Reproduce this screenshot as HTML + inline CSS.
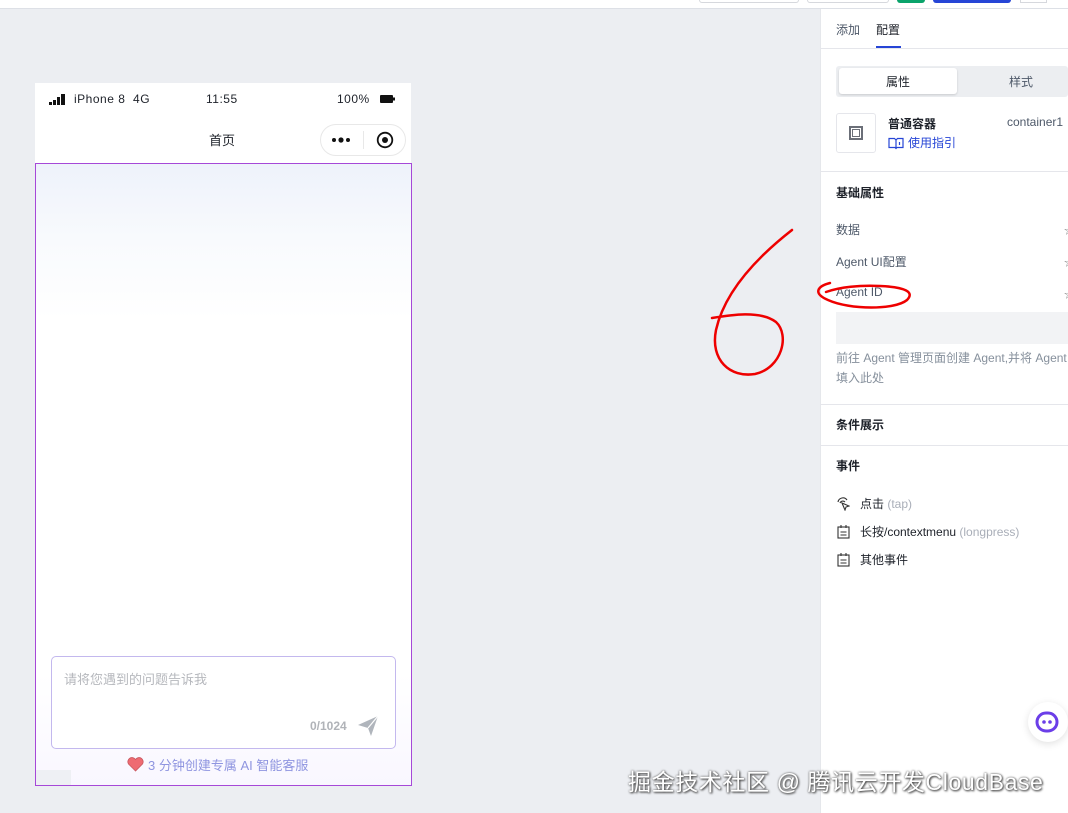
<!DOCTYPE html>
<html><head><meta charset="utf-8"><style>
*{margin:0;padding:0;box-sizing:border-box}
body{width:1068px;height:813px;overflow:hidden;background:#eceef2;font-family:"Liberation Sans","Noto Sans CJK SC",sans-serif;position:relative;color:#1d2129}
.abs{position:absolute}
.topbar{left:0;top:0;width:1068px;height:9px;background:#fff;border-bottom:1px solid #dde0e6}
.panel{left:820px;top:9px;width:248px;height:804px;background:#fff;border-left:1px solid #e5e7eb}
.t12{font-size:12px}
.hr{position:absolute;left:820px;width:248px;height:1px;background:#e5e6eb}
</style></head><body>
<div class="abs topbar"></div>
<div class="abs" style="left:699px;top:0;width:100px;height:3px;border:1px solid #d6d8dd;border-top:none;border-radius:0 0 3px 3px"></div>
<div class="abs" style="left:807px;top:0;width:82px;height:3px;border:1px solid #d6d8dd;border-top:none;border-radius:0 0 3px 3px"></div>
<div class="abs" style="left:897px;top:0;width:28px;height:3px;background:#0aa36b;border-radius:0 0 4px 4px"></div>
<div class="abs" style="left:933px;top:0;width:78px;height:3px;background:#2645d6;border-radius:0 0 4px 4px"></div>
<div class="abs" style="left:1020px;top:0;width:27px;height:3px;border:1px solid #d6d8dd;border-top:none"></div>

<!-- phone -->
<div class="abs" style="left:35px;top:83px;width:376px;height:80px;background:#fff"></div>
<svg class="abs" style="left:49px;top:93px" width="18" height="13"><rect x="0" y="9" width="3" height="3" fill="#111"/><rect x="4" y="7" width="3" height="5" fill="#111"/><rect x="8" y="4" width="3" height="8" fill="#111"/><rect x="12" y="1" width="4" height="11" fill="#111"/></svg>
<div class="abs t12" style="left:74px;top:92px;letter-spacing:.5px">iPhone 8&nbsp; 4G</div>
<div class="abs t12" style="left:206px;top:92px;letter-spacing:.5px">11:55</div>
<div class="abs t12" style="left:337px;top:92px;letter-spacing:.5px">100%</div>
<svg class="abs" style="left:380px;top:95px" width="15" height="8"><rect x="0" y="0" width="13" height="8" rx="1" fill="#111"/><rect x="13" y="2.5" width="2" height="3" fill="#111"/></svg>
<div class="abs" style="left:209px;top:130px;font-size:13px">首页</div>
<div class="abs" style="left:320px;top:124px;width:86px;height:32px;border:1px solid #e8e8e8;border-radius:16px;background:#fff"></div>
<div class="abs" style="left:363px;top:131px;width:1px;height:18px;background:#e8e8e8"></div>
<svg class="abs" style="left:331px;top:136px" width="20" height="8"><circle cx="3" cy="4" r="2" fill="#111"/><circle cx="10" cy="4" r="2.6" fill="#111"/><circle cx="17" cy="4" r="2" fill="#111"/></svg>
<svg class="abs" style="left:376px;top:131px" width="18" height="18"><circle cx="9" cy="9" r="7.3" fill="none" stroke="#111" stroke-width="1.8"/><circle cx="9" cy="9" r="3" fill="#111"/></svg>
<div class="abs" style="left:35px;top:163px;width:377px;height:623px;border:1px solid #a648d8;background:linear-gradient(180deg,#eef2fb 0%,#f8fafd 12%,#fff 25%,#fff 82%,#f9f7ff 100%)"></div>
<div class="abs" style="left:51px;top:656px;width:345px;height:93px;border:1px solid #c3b8ee;border-radius:5px;background:#fff"></div>
<div class="abs" style="left:64px;top:669px;font-size:13px;color:#b6b8bd">请将您遇到的问题告诉我</div>
<div class="abs t12" style="left:310px;top:719px;color:#b0b3b8;font-weight:bold">0/1024</div>
<svg class="abs" style="left:356px;top:714px" width="24" height="24"><path d="M2 11 L22 2 L15 22 L12 14 Z" fill="#b0b5bc"/><path d="M12 14 L22 2" stroke="#fff" stroke-width="1.2"/></svg>
<svg class="abs" style="left:127px;top:757px" width="17" height="15"><path d="M8.5 14 L1.5 7 A3.8 3.8 0 0 1 8.5 2.5 A3.8 3.8 0 0 1 15.5 7 Z" fill="#ee6b72" stroke="#c85860" stroke-width=".8"/></svg>
<div class="abs" style="left:148px;top:755px;font-size:13px;color:#8f95e0">3 分钟创建专属 AI 智能客服</div>
<div class="abs" style="left:36px;top:770px;width:35px;height:15px;background:#eef0f4"></div>

<!-- panel -->
<div class="abs panel"></div>
<div class="abs t12" style="left:836px;top:21px;color:#4e5969">添加</div>
<div class="abs t12" style="left:876px;top:21px;color:#1d2129">配置</div>
<div class="abs" style="left:876px;top:46px;width:25px;height:2px;background:#2645d6"></div>
<div class="hr" style="top:48px"></div>
<div class="abs" style="left:836px;top:66px;width:232px;height:31px;background:#eceef1;border-radius:3px"></div>
<div class="abs" style="left:839px;top:68px;width:118px;height:26px;background:#fff;border-radius:3px;box-shadow:0 1px 2px rgba(0,0,0,.15)"></div>
<div class="abs t12" style="left:886px;top:73px">属性</div>
<div class="abs t12" style="left:1009px;top:73px;color:#4e5969">样式</div>
<div class="abs" style="left:836px;top:113px;width:40px;height:40px;border:1px solid #e5e6eb;border-radius:3px"></div>
<div class="abs" style="left:849px;top:126px;width:14px;height:14px;border:2px solid #6b6f78"></div>
<div class="abs" style="left:852px;top:129px;width:8px;height:8px;border:1px solid #6b6f78"></div>
<div class="abs t12" style="left:888px;top:115px;font-weight:bold">普通容器</div>
<div class="abs t12" style="left:1007px;top:115px;color:#4e5969">container1</div>
<svg class="abs" style="left:888px;top:137px" width="16" height="13"><path d="M1 1.5h5.5l1.5 1.5 1.5-1.5H15v9H9l-1 1-1-1H1z" fill="none" stroke="#2645d6" stroke-width="1.2"/><path d="M8 3v8M11.5 5v3" stroke="#2645d6" stroke-width="1.2"/></svg>
<div class="abs t12" style="left:908px;top:134px;color:#2645d6">使用指引</div>
<div class="hr" style="top:171px"></div>
<div class="abs t12" style="left:836px;top:184px;font-weight:bold">基础属性</div>
<div class="abs t12" style="left:836px;top:221px;color:#4e5969">数据</div>
<div class="abs t12" style="left:836px;top:253px;color:#4e5969">Agent UI配置</div>
<div class="abs t12" style="left:836px;top:285px;color:#4e5969">Agent ID</div>
<div class="abs" style="left:1064px;top:222px;font-size:10px;color:#888">☆</div>
<div class="abs" style="left:1064px;top:254px;font-size:10px;color:#888">☆</div>
<div class="abs" style="left:1064px;top:286px;font-size:10px;color:#888">☆</div>
<div class="abs" style="left:836px;top:312px;width:232px;height:32px;background:#f2f3f5"></div>
<div class="abs t12" style="left:836px;top:348px;color:#86909c;line-height:20px;white-space:nowrap">前往 Agent 管理页面创建 Agent,并将 Agent<br>填入此处</div>
<div class="hr" style="top:404px"></div>
<div class="abs t12" style="left:836px;top:416px;font-weight:bold">条件展示</div>
<div class="hr" style="top:445px"></div>
<div class="abs t12" style="left:836px;top:457px;font-weight:bold">事件</div>
<svg class="abs" style="left:836px;top:497px" width="14" height="14"><path d="M2 5a5 5 0 0 1 9-2M4 6a3 3 0 0 1 5-1M6 6l7 3-3 1-1 3z" fill="none" stroke="#333" stroke-width="1.1"/></svg>
<div class="abs t12" style="left:860px;top:495px">点击 <span style="color:#a9aeb8">(tap)</span></div>
<svg class="abs" style="left:837px;top:525px" width="13" height="14"><rect x="1" y="2" width="11" height="11" fill="none" stroke="#333" stroke-width="1.1"/><path d="M4 0v3M9 0v3M3.5 7h6M3.5 10h6" stroke="#333" stroke-width="1.1"/></svg>
<div class="abs t12" style="left:860px;top:523px">长按/contextmenu <span style="color:#a9aeb8">(longpress)</span></div>
<svg class="abs" style="left:837px;top:553px" width="13" height="14"><rect x="1" y="2" width="11" height="11" fill="none" stroke="#333" stroke-width="1.1"/><path d="M4 0v3M9 0v3M3.5 7h6M3.5 10h6" stroke="#333" stroke-width="1.1"/></svg>
<div class="abs t12" style="left:860px;top:551px">其他事件</div>
<div class="abs" style="left:1028px;top:702px;width:40px;height:40px;border-radius:50%;background:#fff;box-shadow:0 2px 8px rgba(0,0,0,.12)"></div>
<svg class="abs" style="left:1034px;top:710px" width="26" height="24"><rect x="3" y="3" width="20" height="18" rx="9" fill="none" stroke="#6b3ee8" stroke-width="3"/><circle cx="10" cy="12" r="1.8" fill="#6b3ee8"/><circle cx="16" cy="12" r="1.8" fill="#6b3ee8"/></svg>

<!-- red drawing -->
<svg class="abs" style="left:0;top:0" width="1068" height="813">
<path d="M792 230 C760 255 725 290 716 330 C710 360 730 378 755 374 C782 368 790 335 776 322 C760 310 730 315 712 318" fill="none" stroke="#e00" stroke-width="2.5" stroke-linecap="round"/>
<path d="M830 283 C818 286 812 293 828 300 C850 310 895 310 907 300 C915 292 905 287 880 286 C860 285 840 287 826 292" fill="none" stroke="#e00" stroke-width="2.5" stroke-linecap="round"/>
</svg>
<div class="abs" style="left:628px;top:763px;font-size:23px;letter-spacing:.6px;color:#fff;text-shadow:0 0 2px #555,1px 1px 2px #333;white-space:nowrap">掘金技术社区 @ 腾讯云开发CloudBase</div>
</body></html>
